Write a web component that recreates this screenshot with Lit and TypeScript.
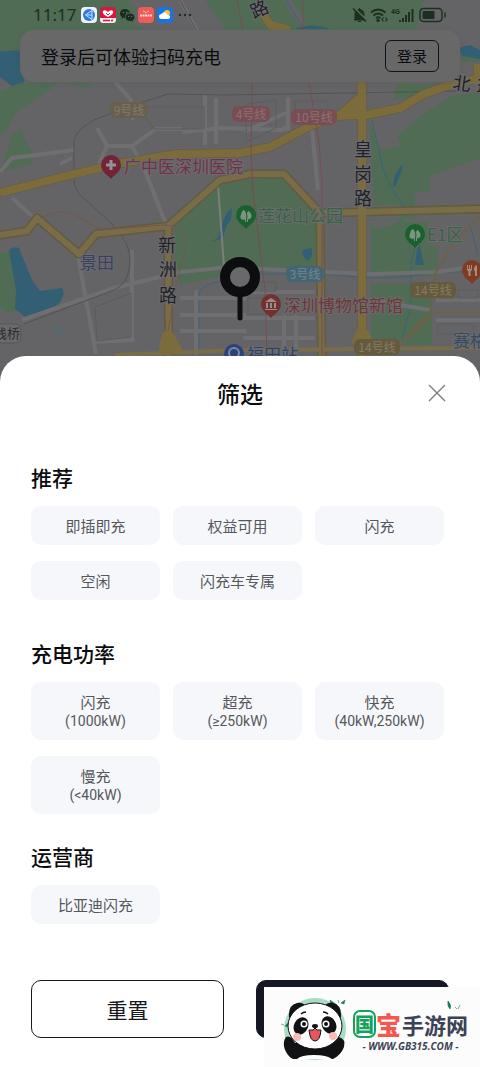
import { LitElement, html, svg, css } from "lit";
import { customElement, property } from "lit/decorators.js";

const TREE = svg`<path d="M-1 6V3.500c-3.500.8-5-.5-4.500-3C-5-2-4-5-2.500-6 0-5 1 0 0 2.500L0 6zM1 6V3c.6-2 .6-4-.2-6L2.500-5C5-3 6.500 0 5 2 4 3 3 3.300 2 3.300V6z" fill="#7d9482"/>`;

@customElement("city-map")
export class CityMap extends LitElement {
  static styles = css`
    :host { display: block; min-width: 0; }
    .map { display: block; width: 100%; height: 382px; background: #646467; }
    text { font-family: "Noto Sans CJK SC", sans-serif; }
    .road { font-size: 18px; fill: #1f2229; text-anchor: middle; }
    .halo { stroke: #6c6c6f; stroke-width: 2px; paint-order: stroke; stroke-linejoin: round; }
    .poi { font-size: 17px; }
    .badge { font-size: 12px; text-anchor: middle; }
  `;

  private badge(x: number, y: number, w: number, fill: string, ink: string, label: string) {
    return svg`<rect x=${x - w / 2} y=${y - 8} width=${w} height="16" rx="6" fill=${fill}/>
      <text class="badge" fill=${ink} x=${x} y=${y + 5}>${label}</text>`;
  }

  private pin(x: number, y: number, fill: string, glyph: unknown) {
    return svg`<g transform="translate(${x} ${y})">
      <path d="M0 13C-3 9-10 6-10-1A10 10 0 0 1 10-1C10 6 3 9 0 13z" fill=${fill}/>${glyph}</g>`;
  }

  render() {
    return html`<svg class="map" viewBox="0 0 480 382" preserveAspectRatio="xMidYMin slice" role="img" aria-label="地图">
      <g fill="#506c54">
        <path d="M0 0H127L136 9 134 24 146 30H60L18 50H0zM205 0H284L292 16 304 30H226zM292 0H424L419 22 414 30H309z"/>
        <path d="M0 92L20 83H80L94 85 86 88 60 82 46 92 32 102 18 111 5 133 0 135zM12 134L22 129 25 140 34 154 32 164 0 172z"/>
        <path d="M174 226L222 184 284 176 312 205 318 216V272H240L180 285 175 270z"/>
        <path d="M397 84H452L440 92 394 100zM480 92L452 96 425 112 410 125 397 136 401 146 381 150 369 119 374 205H415V192H430V176L480 158z"/>
        <path d="M371 219H400V205H415V219H404V222H428V244L438 248V276H371zM371 283H432V345H371zM0 254L12 250 20 310 8 312 0 308zM461 54h19v8h-19z"/>
      </g>
      <path d="M371 220H402L390 226 374 228z" fill="#646467"/>
      <g fill="#325f73">
        <path d="M0 51L22 50 24 82 12 86 0 77zM9 250q4-4 10-2L32 280 40 291 62 288q4 6-2 14-14 15-32 17L15 309 16 290z"/>
        <path d="M295 29Q312 22 330 29zM458 48l12-3 10 5v9l-18-3zM210 242l8-4 4-14 5-12 5-4-1 12-5 6-3 12-6 2zM302 250l10-2v8l-4 5-5-5zM415 265l2-16 3-4 2 12 2 8zM393 186l2-12 8-10-2 9-6 14z"/>
      </g>
      <g fill="none" stroke="#3a6578" stroke-width="1">
        <path d="M372 120l9 40q4 24 24 47M286 0l16 26M415 247l-4 18v40l-9 35M199 355V296q0-10 18-14l23-8h80l52 4q40 0 64-6h46M470 225l8 30"/>
      </g>
      <g fill="none" stroke="#6f6f72" stroke-width="4">
        <path d="M115 82l16 18 2 20M205 95v50M216 98v46M182 132l40-4 60 2 6-4M97 128l10 18 25 0 24-17 26 0M107 146l-8 18M132 146l12 22 21 54M244 132l44-20M288 97v34M12 198l20 18M78 256l18 98M132 250v90L92 342M22 320l92-32 66-16 60-6M180 298h66M180 315h66M180 331h66M196 290v65M245 292h70M243 318h72M243 338h72M284 315v40M296 315v40M436 300h44M436 320h44M60 164l12-6M0 172l12-14 62-8M370 300l60 10M180 0l18 32M240 268l132 6 64-2 44-6M312 130l6 60"/>
      </g>
      <path d="M218 186l6 80" stroke="#7b7f7c" stroke-width="2" fill="none"/>
      <g fill="none" stroke="#545352" stroke-width="1">
        <path d="M74 180V140q2-10 20-20l36-14 38-12 58 1 240-4M74 180q0 12 12 20l26 24q20 20 18 40-2 20-16 26L24 324M180 0l16 30"/>
        <path d="M276 100v28l-30 14V104zM295 101h33v10l-32 12zM248 282h28v9h-28zM248 298h20v16h-20zM138 107h66v22h-50zM438 290h16v8h-16zM458 290h20v8h-20zM438 324h36v10h-36zM95 307l36-14v44l-34 4z" stroke="#5c5c5e"/>
      </g>
      <g fill="none" stroke="#645a3c" stroke-width="9" stroke-linejoin="round">
        <path d="M0 193L54 179 116 164 176 154 240 153 270 147 308 127 334 116 366 115 400 108 424 94 446 86 480 78M336 118L364 94"/>
        <path d="M362 82V376M0 235L27 231 37 218 79 254 96 234 168 226 220 180 250 174H284L320 213 322 376M322 213L480 209M168 226L169 376M260 8l10 17 20 5M478 64v20"/>
      </g>
      <g fill="none" stroke="#7c6c3b" stroke-width="8" stroke-linejoin="round">
        <path d="M0 193L54 179 116 164 176 154 240 153 270 147 308 127 334 116 366 115 400 108 424 94 446 86 480 78M336 118L364 94"/>
        <path d="M362 82V376M260 8l10 17 20 5M478 64v20" />
      </g>
      <g fill="none" stroke="#796d49" stroke-width="6" stroke-linejoin="round">
        <path d="M0 235L27 231 37 218 79 254 96 234 168 226 220 180 250 174H284L320 213 322 376M322 213L480 209M168 226L169 376"/>
        <path d="M115 355L240 350 480 348" stroke-width="4"/>
      </g>
      <path d="M162 334q6-8 12 0l10 20h-26zM357 330q6-4 10 0l8 14h-24zM338 116l26-24v24z" fill="#7c6c3b"/>
      <g fill="none" stroke-width="1">
        <path d="M252 82l-1 70 2 40 12 98 2 68M309 82l10 60 3 40v180M303 0v30M237 0l6 30" stroke="#7b4b50"/>
        <path d="M40 218q24-12 40 0l22 12 62-5q26 0 21 26l-9 34-8 46" stroke="#78564c"/>
        <path d="M480 215l-30 33-15 26-4 36-30 34M480 312h-44l-36 32" stroke="#6f6149" stroke-width="2"/>
      </g>
      <path d="M53 331l4-2-1 4zM58 326l3 2-3 2zM59 332l4 0-3 3z" fill="#347382"/>

      ${this.badge(129, 110, 38, "#685f4e", "#827a6e", "9号线")}
      ${this.badge(251, 114, 38, "#784d53", "#8e7074", "4号线")}
      ${this.badge(314, 117, 46, "#784d53", "#8e7074", "10号线")}
      ${this.badge(305, 274, 38, "#466574", "#6f8793", "3号线")}
      ${this.badge(433, 290, 46, "#655a3c", "#847b66", "14号线")}
      ${this.badge(377, 347, 46, "#655a3c", "#847b66", "14号线")}

      ${this.pin(111, 166, "#702438", svg`<path d="M-1.500-6h3v3.500h3.500v3h-3.500v3.500h-3v-3.500h-3.500v-3h3.500z" fill="#989094"/>`)}
      ${this.pin(246, 216, "#1b6130", TREE)}
      ${this.pin(415, 235, "#1b6130", TREE)}
      ${this.pin(271, 305, "#74302d", svg`<path d="M-6-3L0-7 6-3zM-5-2h2v5h-2zM-1-2h2v5h-2zM3-2h2v5h-2zM-6 4h12v1h-12z" fill="#988e8c"/>`)}
      ${this.pin(472, 271, "#813b22", svg`<path d="M-5-6h1v4h1v-4h1v4h1v-4h1v5l-1.500 1.500v4.500h-2V0.500L-5-1zM5-6c-3 1-4 5-2 6.500V5h2z" fill="#a08d84"/>`)}
      <circle cx="234" cy="354" r="10" fill="#29437b"/><circle cx="234" cy="353" r="5" fill="none" stroke="#8088a0" stroke-width="2"/>

      <text class="poi halo" x="124" y="173" fill="#713249">广中医深圳医院</text>
      <text class="poi halo" x="258" y="222" fill="#376342">莲花山公园</text>
      <text class="poi halo" x="427" y="241" fill="#376342">E1区</text>
      <text class="poi halo" x="284" y="312" fill="#6f3638">深圳博物馆新馆</text>
      <text class="poi halo" x="80" y="269" fill="#383f62">景田</text>
      <text class="poi halo" x="247" y="361" fill="#2b4270">福田站</text>
      <text class="poi halo" x="453" y="347" fill="#334b60">赛格</text>
      <rect x="-10" y="324" width="31" height="19" rx="6" fill="#6b6b6d" stroke="#555557"/>
      <text x="-6" y="338" font-size="13" fill="#2b2d31">栈桥</text>
      <text class="road halo" x="167" y="252">新</text>
      <text class="road halo" x="168" y="276">洲</text>
      <text class="road halo" x="168" y="302">路</text>
      <text class="road halo" x="363" y="156">皇</text>
      <text class="road halo" x="363" y="181">岗</text>
      <text class="road halo" x="363" y="205">路</text>
      <text class="road halo" transform="translate(262 15) rotate(-24)">路</text>
      <text class="road halo" transform="translate(461 90) rotate(8)">北</text>
      <text class="road halo" transform="translate(485 94) rotate(8)">环</text>

      <circle cx="240" cy="277" r="15" fill="#69696b" stroke="#0c0d0f" stroke-width="10"/>
      <path d="M240 295V318" stroke="#0c0d0f" stroke-width="5" stroke-linecap="round"/>
    </svg>`;
  }
}

@customElement("status-bar")
export class StatusBar extends LitElement {
  static styles = css`
    :host { display: flex; align-items: center; height: 30px; padding: 0 33px; gap: 5px; color: #1c2f20;
      font-family: "Noto Sans", "Noto Sans CJK SC", sans-serif; }
    .time { font-size: 17px; line-height: 30px; }
    .apps { display: flex; gap: 3px; align-items: center; }
    svg { display: block; }
    .system { display: flex; align-items: center; gap: 3px; margin-left: auto; }
  `;
  render() {
    return html`
      <span class="time">11:17</span>
      <span class="apps">
        <svg width="16" height="16" viewBox="0 0 16 16"><rect width="16" height="16" rx="4" fill="#eef2f8"/><circle cx="8" cy="8" r="6" fill="#2d7ae0"/><path d="M11 3.500L4.500 8l6.500 4.500zM5 8l6 0" stroke="#cfe4ff" fill="none"/></svg>
        <svg width="16" height="16" viewBox="0 0 16 16"><rect width="16" height="16" rx="4" fill="#d9163e"/><path d="M0 11h16v2a3 3 0 0 1-3 3H3a3 3 0 0 1-3-3z" fill="#f5e9ec"/><path d="M8 10C4 8 2 6 3 4q2-2 5 1 3-3 5-1c1 2-1 4-5 6z" fill="#fff"/><path d="M6 6l2 2 2-2" stroke="#d9163e" fill="none"/><path d="M3 13.500h7M11 13.500h2" stroke="#d9163e" stroke-width="1.500"/></svg>
        <svg width="16" height="16" viewBox="0 0 16 16" fill="#1a2c1e"><path d="M6 2C2.500 2 1 4.500 1 6.500c0 1.500.8 2.700 2 3.500l-.6 1.800L4.600 10.700H6C5.500 7.500 8 5.500 11 5.600 10.500 3.500 8.500 2 6 2z"/><path d="M11 6.500c-2.500 0-4.500 1.600-4.500 3.700S8.500 14 11 14l1.300-.2 1.800 1-.5-1.500c1.100-.7 1.900-1.800 1.900-3.100 0-2.100-2-3.700-4.500-3.700z"/><g fill="#5c7562"><circle cx="4.500" cy="5.500" r=".8"/><circle cx="7.800" cy="5.300" r=".8"/><circle cx="9.500" cy="9.500" r=".7"/><circle cx="12.500" cy="9.500" r=".7"/></g></svg>
        <svg width="16" height="16" viewBox="0 0 16 16"><rect width="16" height="16" rx="4" fill="#ef5b56"/><path d="M5 4q3 3 6 0" stroke="#ffb8b0" fill="none"/><path d="M2 8.500h12" stroke="#ffd9d4" stroke-width="2" stroke-dasharray="2 .5"/></svg>
        <svg width="16" height="16" viewBox="0 0 16 16"><rect width="16" height="16" rx="4" fill="#1673e8"/><circle cx="10" cy="6" r="3" fill="#ffc21b"/><path d="M4.500 12a2.500 2.500 0 0 1 0-5 3.300 3.300 0 0 1 6.200 1A2 2 0 0 1 11.500 12z" fill="#fff"/></svg>
        <svg width="18" height="16" viewBox="0 0 18 16" fill="#1c2f20"><circle cx="4" cy="8" r="1.200"/><circle cx="9" cy="8" r="1.200"/><circle cx="14" cy="8" r="1.200"/></svg>
      </span>
      <span class="system">
        <svg width="15" height="16" viewBox="0 0 15 16"><path d="M7.500 1v1.500M3 12V7a4.500 4.500 0 0 1 9 0v5l1 1H2zM6 14.500h3" fill="#1c2f20" stroke="#1c2f20"/><path d="M2 1l13 12" stroke="#506c54" stroke-width="2"/><path d="M1 1.500l13 13" stroke="#1c2f20" stroke-width="1.500"/></svg>
        <svg width="18" height="16" viewBox="0 0 18 16" fill="none" stroke="#1c2f20" stroke-width="1.800"><path d="M1 5.500q7-6 14.500 0M3.500 8.500q4.500-4 9.500 0M6 11q2-1.500 4.500 0"/><circle cx="8" cy="13.500" r=".8" fill="#1c2f20"/><path d="M13.500 10.500l-1.500 2 1.500 2M15.500 10.500l1.500 2-1.500 2" stroke-width="1.200"/></svg>
        <svg width="24" height="16" viewBox="0 0 24 16"><text x="0" y="7" font-size="7" font-weight="700" font-family="Roboto, sans-serif" fill="#1c2f20">4G</text><path d="M9 15v-2M12 15v-4M15 15V8M18 15V5M21.500 15V2" stroke="#1c2f20" stroke-width="2"/></svg>
        <svg width="29" height="16" viewBox="0 0 29 16"><rect x="2" y="1.500" width="22" height="13" rx="3.500" fill="none" stroke="#1c2f20" stroke-width="1.500"/><rect x="4.500" y="4" width="12" height="8" rx="1" fill="#1c2f20"/><path d="M27 5.500v5" stroke="#1c2f20" stroke-width="1.500"/></svg>
      </span>`;
  }
}

interface Option { name: string; range?: string; }

@customElement("filter-group")
export class FilterGroup extends LitElement {
  @property() heading = "";
  @property({ attribute: false }) options: Option[] = [];

  static styles = css`
    :host { display: block; font-family: "Noto Sans CJK SC", sans-serif; }
    h2 { margin: 0 0 16px; font-size: 21px; line-height: 26px; font-weight: 500; color: #0c0c0e; }
    .options { display: grid; grid-template-columns: repeat(3, 1fr); gap: 16px 13px; }
    .chip { display: flex; flex-direction: column; align-items: center; justify-content: center;
      min-height: 39px; padding: 0; border: 0; border-radius: 10px; background: #f5f7fb;
      color: #55575b; font: 400 15px/20px "Noto Sans CJK SC", sans-serif; }
    .chip.tall { min-height: 58px; }
    .range { font: 400 14px/18px Roboto, "Noto Sans CJK SC", sans-serif; }
  `;
  render() {
    return html`<h2 id="heading">${this.heading}</h2>
      <div class="options" role="group" aria-labelledby="heading">
        ${this.options.map((o) => html`<button type="button" class="chip ${o.range ? "tall" : ""}">
          <span>${o.name}</span>${o.range ? html`<span class="range">${o.range}</span>` : ""}
        </button>`)}
      </div>`;
  }
}

@customElement("site-mark")
export class SiteMark extends LitElement {
  static styles = css`
    :host { display: flex; align-items: center; gap: 6px; width: 199px; height: 80px; padding-left: 17px; background: #fbfcfb; }
    svg { flex: none; display: block; }
    .words { display: flex; flex-direction: column; align-items: center; font-family: "Noto Sans CJK SC", sans-serif; }
    .leaves { align-self: flex-end; margin-right: 6px; }
    .name { display: flex; align-items: center; font-size: 22px; line-height: 28px; font-weight: 700; color: #3b4256; white-space: nowrap; }
    .guo { font-size: 19px; line-height: 24px; border: 2px solid #12a35c; border-radius: 7px; color: #12a35c; font-weight: 900; }
    .bao { font-size: 25px; color: #f4574e; font-weight: 900; margin-right: 1px; }
    .url { font: italic 700 10px/16px "Open Sans", sans-serif; color: #3b4256; white-space: nowrap; }
  `;
  render() {
    return html`
      <svg width="66" height="68" viewBox="0 0 66 68" aria-hidden="true">
        <circle cx="34" cy="36" r="31" fill="#a9dcc4"/>
        <path d="M49 7l7 5-1 5-5-4zM60 10l4-3-1 4zM57 7l1 3M0 31l3 1M4 33l4-4-2 5z" fill="#1c7c51" stroke="#1c7c51" stroke-width=".6"/>
        <path d="M12 66C4 62 0 50 5 44q5-2 9 6h36q2-8 8-6 7 2 5 10-3 8-11 12z" fill="#111214"/>
        <path d="M16 66q4-4 17-4t18 4z" fill="#fff"/>
        <path d="M8 24q-1-12 8-14 6-1 8 3L10 28zM60 24q1-12-8-14-6-1-8 3l14 15z" fill="#111214"/>
        <ellipse cx="34" cy="33" rx="27" ry="23" fill="#fff" stroke="#111214"/>
        <ellipse cx="20" cy="33" rx="7" ry="9" transform="rotate(28 20 33)" fill="#111214"/>
        <ellipse cx="48" cy="32" rx="7" ry="9" transform="rotate(-28 48 32)" fill="#111214"/>
        <circle cx="23" cy="31" r="3.500" fill="#fff"/><circle cx="45" cy="31" r="3.500" fill="#fff"/>
        <circle cx="23" cy="31" r="2" fill="#111214"/><circle cx="45" cy="31" r="2" fill="#111214"/>
        <path d="M25 19q-3 0-5 2M42 19q3 0 5 2" stroke="#111214" stroke-width="1.500" fill="none"/>
        <ellipse cx="34" cy="33" rx="3" ry="2" fill="#111214"/>
        <path d="M28 37q5 1 6-2 1 3 6 2-1 11-6 11t-6-11z" fill="#e3575d" stroke="#111214"/>
        <circle cx="16" cy="44" r="4" fill="#fbb9b6"/><circle cx="52" cy="43" r="4" fill="#fbb9b6"/>
      </svg>
      <div class="words">
        <svg class="leaves" width="16" height="9" viewBox="0 0 16 9" aria-hidden="true"><path d="M2 0q4 4 2 8-3-3-2-8zM14 4l-2 4M9 6l2 2" fill="#1c7c51" stroke="#1c7c51" stroke-width=".6"/></svg>
        <span class="name"><span class="guo">国</span><span class="bao">宝</span>手游网</span>
        <span class="url">- WWW.GB315.COM -</span>
      </div>`;
  }
}

@customElement("app-root")
export class AppRoot extends LitElement {
  static styles = css`
    :host { display: block; position: relative; overflow: hidden; min-height: 100vh; background: #646467;
      font-family: "Noto Sans CJK SC", sans-serif; }
    .backdrop { display: grid; }
    .backdrop > * { grid-area: 1 / 1; }
    .login { display: flex; align-items: center; justify-content: space-between; margin: 0 20px; padding: 10px 21px;
      border-radius: 14px; background: #686869; color: #0b0c0e; font-size: 18px; line-height: 32px; box-shadow: 0 1px 5px #55555566; }
    .login button { height: 32px; padding: 0 11px; border: 1px solid #121317; border-radius: 6px; background: none;
      color: #0b0c0e; font: 400 15px/28px "Noto Sans CJK SC", sans-serif; }
    .sheet { position: relative; margin-top: -26px; border-radius: 26px 26px 0 0; background: #fff; }
    header { display: grid; grid-template-columns: 1fr auto 1fr; align-items: center; height: 74px; padding: 0 34px; }
    h1 { grid-column: 2; margin: 0; font-size: 23px; line-height: 32px; font-weight: 500; color: #0c0c0e; }
    .close { justify-self: end; display: flex; padding: 0; border: 0; background: none; }
    .filters { display: flex; flex-direction: column; padding: 34px 36px 0 31px; }
    filter-group { margin-bottom: 40px; }
    filter-group.compact { margin-bottom: 29px; }
    footer { display: grid; grid-template-columns: 1fr 1fr; gap: 32px; padding: 16px 31px 29px; }
    footer button { height: 58px; border: 1px solid #17191f; border-radius: 10px; background: #fff; color: #17191f;
      font: 400 21px/28px "Noto Sans CJK SC", sans-serif; }
    footer .confirm { background: #151824; }
    site-mark { position: absolute; right: 0; bottom: 0; }
  `;
  render() {
    return html`
      <div class="backdrop">
        <city-map></city-map>
        <div>
          <status-bar></status-bar>
          <div class="login"><span>登录后可体验扫码充电</span><button type="button">登录</button></div>
        </div>
      </div>
      <main class="sheet">
        <header>
          <h1>筛选</h1>
          <button type="button" class="close" aria-label="关闭">
            <svg width="18" height="18" viewBox="0 0 18 18"><path d="M1 1l16 16M17 1L1 17" stroke="#7d7d80" stroke-width="1.400"/></svg>
          </button>
        </header>
        <div class="filters">
          <filter-group .heading=${"推荐"} .options=${[{ name: "即插即充" }, { name: "权益可用" }, { name: "闪充" }, { name: "空闲" }, { name: "闪充车专属" }]}></filter-group>
          <filter-group class="compact" .heading=${"充电功率"} .options=${[
            { name: "闪充", range: "(1000kW)" }, { name: "超充", range: "(≥250kW)" },
            { name: "快充", range: "(40kW,250kW)" }, { name: "慢充", range: "(<40kW)" }]}></filter-group>
          <filter-group .heading=${"运营商"} .options=${[{ name: "比亚迪闪充" }]}></filter-group>
        </div>
        <footer>
          <button type="button">重置</button>
          <button type="button" class="confirm" aria-label="确认"></button>
        </footer>
      </main>
      <site-mark></site-mark>`;
  }
}
